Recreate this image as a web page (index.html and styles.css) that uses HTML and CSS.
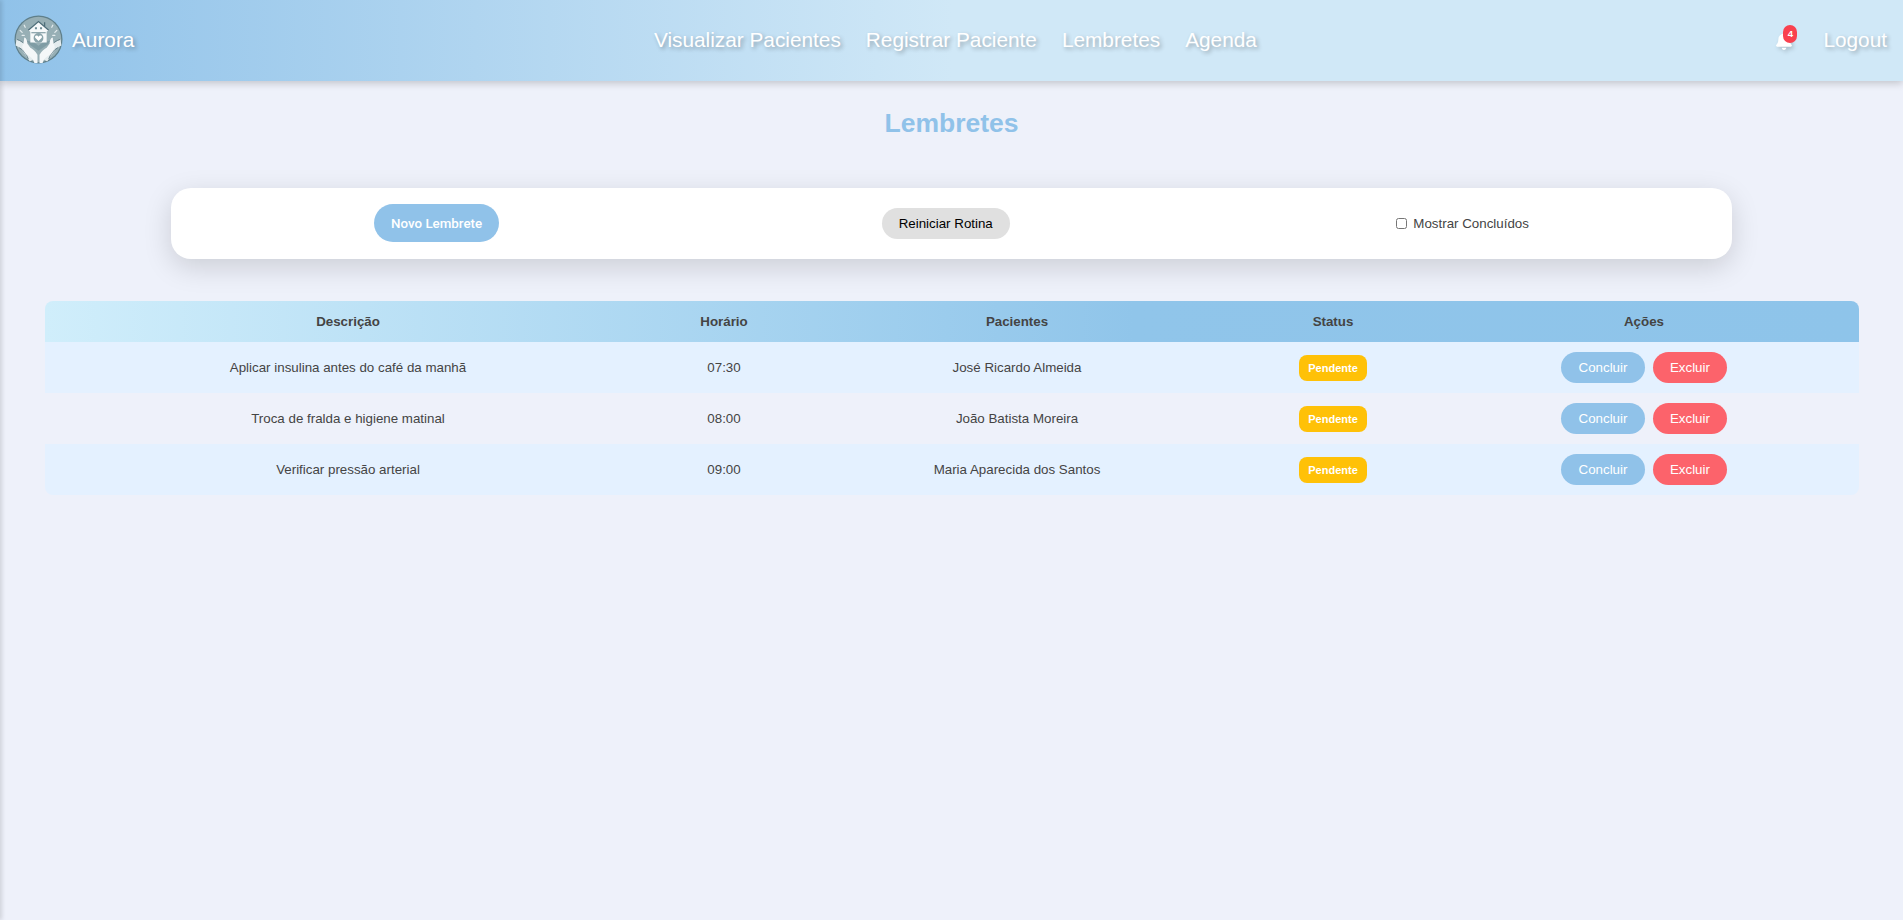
FILE: index.html
```html
<!DOCTYPE html>
<html lang="pt-BR">
<head>
<meta charset="utf-8">
<title>Lembretes</title>
<link rel="stylesheet" href="styles.css">
</head>
<body>
<div class="edge"></div>
<header class="navbar">
  <a class="brand" href="#">
    <svg class="logo" viewBox="0 0 48 48" aria-hidden="true">
      <circle cx="24" cy="24" r="23.5" fill="#5f7f8a"/>
      <circle cx="24" cy="24" r="22.3" fill="#97afb5"/>
      <path d="M2 27c6 1 10 8 16 17M46 27c-6 1-10 8-16 17" fill="none" stroke="#e4ecee" stroke-width="6"/>
      <path d="M3 24c7 2 12 9 17 20M45 24c-7 2-12 9-17 20M5 32c4 2 7 6 9 11M43 32c-4 2-7 6-9 11" fill="none" stroke="#587681" stroke-width=".9"/>
      <path d="M12 25c4 1 9 2 12 5 3-3 8-4 12-5l-3 4-9 6-9-6z" fill="#7f9ca4"/>
      <path d="M8 31c1-2 2-6 2-9 2 0 3 3 3 6l3 4c2 1 5 3 7 7v8h-3c-1-4-4-6-7-8-2-1-4-5-5-8zM40 31c-1-2-2-6-2-9-2 0-3 3-3 6l-3 4c-2 1-5 3-7 7v8h3c1-4 4-6 7-8 2-1 4-5 5-8z" fill="#f4f7f8"/>
      <path d="M14 15 24 6.500l10 8.500-2 1.500V27H16V16.500z" fill="#f6f9fa"/>
      <path d="M14 15 24 6.500l10 8.500M30 7v5" fill="none" stroke="#4f6e79" stroke-width="1.200"/>
      <path d="M20.500 12h2v2h-2zM25.500 12h2v2h-2zM17 17h14v.8H17z" fill="#6f8d96"/>
      <circle cx="24" cy="22.500" r="4.800" fill="#8aa4ab"/>
      <path d="M24 25.500l-3-3c-1.300-1.500.7-3.400 2.100-2.100l.9.800.9-.8c1.400-1.300 3.400.6 2.100 2.100z" fill="#fff"/>
      <path d="M6 15l2 2M10 10l1 2M8 20h2M42 15l-2 2M38 10l-1 2M40 20h-2" stroke="#e4ecee" stroke-width="1.200" stroke-linecap="round"/>
    </svg>
    <span class="brand-name">Aurora</span>
  </a>
  <nav class="nav-links">
    <a href="#">Visualizar Pacientes</a>
    <a href="#">Registrar Paciente</a>
    <a href="#">Lembretes</a>
    <a href="#">Agenda</a>
  </nav>
  <div class="nav-right">
    <span class="bell">
      <svg class="bell-icon" viewBox="0 0 448 512" aria-hidden="true"><path d="M224 512c35 0 64-29 64-64H160c0 35 29 64 64 64zm215-150c-19-21-55-52-55-154 0-78-54-140-128-155V32a32 32 0 0 0-64 0v21C118 68 64 130 64 208c0 102-36 133-55 154-6 6-9 14-9 22 0 16 13 32 32 32h384c19 0 32-16 32-32 0-8-3-16-9-22z"/></svg>
      <span class="bell-badge">4</span>
    </span>
    <a class="logout" href="#">Logout</a>
  </div>
</header>
<main class="page">
  <h1 class="title">Lembretes</h1>
  <section class="toolbar">
    <button class="btn btn-new" type="button">Novo Lembrete</button>
    <button class="btn btn-reset" type="button">Reiniciar Rotina</button>
    <label class="show-done"><input type="checkbox"> Mostrar Concluídos</label>
  </section>
  <table class="reminders">
    <colgroup>
      <col class="c-desc"><col class="c-time"><col class="c-pat"><col class="c-status"><col class="c-act">
    </colgroup>
    <thead>
      <tr><th>Descrição</th><th>Horário</th><th>Pacientes</th><th>Status</th><th>Ações</th></tr>
    </thead>
    <tbody>
      <tr>
        <td>Aplicar insulina antes do café da manhã</td><td>07:30</td><td>José Ricardo Almeida</td>
        <td><span class="badge">Pendente</span></td>
        <td><button class="btn btn-done" type="button">Concluir</button><button class="btn btn-del" type="button">Excluir</button></td>
      </tr>
      <tr>
        <td>Troca de fralda e higiene matinal</td><td>08:00</td><td>João Batista Moreira</td>
        <td><span class="badge">Pendente</span></td>
        <td><button class="btn btn-done" type="button">Concluir</button><button class="btn btn-del" type="button">Excluir</button></td>
      </tr>
      <tr>
        <td>Verificar pressão arterial</td><td>09:00</td><td>Maria Aparecida dos Santos</td>
        <td><span class="badge">Pendente</span></td>
        <td><button class="btn btn-done" type="button">Concluir</button><button class="btn btn-del" type="button">Excluir</button></td>
      </tr>
    </tbody>
  </table>
</main>
</body>
</html>
```
FILE: styles.css
```css
* { box-sizing: border-box; }
html, body { height: 100%; }
body {
  margin: 0;
  background: #eef1fa;
  color: #444;
  font-family: "Liberation Sans", Arial, sans-serif;
  overflow: hidden;
}
a { color: inherit; text-decoration: none; }

.edge {
  position: fixed;
  top: 0;
  bottom: 0;
  left: -10px;
  width: 10px;
  box-shadow: 2px 0 4px rgba(0, 0, 0, .13);
  z-index: 5;
}

.navbar {
  position: relative;
  display: flex;
  align-items: center;
  justify-content: space-between;
  height: 81px;
  padding: 0 16px 2px 14px;
  background: linear-gradient(90deg, #90c2e9 0%, #d0e8f7 50%, #d0e8f7 100%);
  box-shadow: 0 2px 8px rgba(0, 0, 0, .2);
  color: #fff;
  font-size: 20.8px;
  text-shadow: 2px 2px 4px rgba(0, 0, 0, .3);
}
.brand { display: flex; align-items: center; gap: 9px; }
.logo { width: 49px; height: 49px; display: block; }
.nav-links { display: flex; gap: 25px; }
.nav-right { display: flex; align-items: center; gap: 31px; }
.bell { position: relative; display: block; width: 16px; height: 18px; margin-top: 3px; }
.bell-icon { display: block; width: 16px; height: 18px; fill: #fff; filter: drop-shadow(2px 2px 2px rgba(0, 0, 0, .2)); }
.bell-badge {
  position: absolute;
  top: -7px;
  left: 7px;
  width: 14px;
  height: 18px;
  border-radius: 9px;
  background: #f9414f;
  color: #fff;
  font-size: 9.5px;
  font-weight: 700;
  line-height: 18px;
  text-align: center;
  text-shadow: none;
}

.page { display: flow-root; }
.title {
  margin: 26px 0 0;
  color: #90c2e9;
  font-size: 26.500px;
  line-height: 32px;
  text-align: center;
}
.toolbar {
  display: flex;
  align-items: center;
  justify-content: space-around;
  width: 82.05%;
  height: 71px;
  margin: 49px auto 0;
  padding: 0 12px 1px;
  background: #fff;
  border-radius: 20px;
  box-shadow: 0 8px 28px rgba(0, 0, 0, .15);
}
.btn {
  padding: 8px 17px;
  border: 0;
  border-radius: 20px;
  color: #fff;
  font-family: inherit;
  font-size: 13.333px;
}
.btn-new { padding: 11px 17px; height: 38px; background: #90c2e9; font-family: Roboto, sans-serif; font-weight: 500; }
.btn-reset { background: #e0e0e0; color: #000; }
.show-done { display: flex; align-items: center; color: #444; font-size: 13.333px; gap: 3px; }
.show-done input { width: 11px; height: 11px; margin: 3px 3px 3px 4px; }

.reminders {
  width: 1814px;
  margin: 42px 0 0 45px;
  border-collapse: separate;
  border-spacing: 0;
  table-layout: fixed;
  font-size: 13.333px;
}
.c-desc { width: 606px; }
.c-time { width: 146px; }
.c-pat { width: 440px; }
.c-status { width: 192px; }
.c-act { width: 430px; }
.reminders thead tr {
  background: linear-gradient(90deg, #d0eefb 0%, #90c5ea 60%, #8ec4ea 100%);
}
.reminders th { height: 41px; padding: 0; font-weight: 700; color: #444; }
.reminders th:first-child { border-top-left-radius: 8px; }
.reminders th:last-child { border-top-right-radius: 8px; }
.reminders td { padding: 10px; text-align: center; }
.reminders tbody tr:nth-child(odd) { background: #e4f1ff; }
.reminders tbody tr:last-child td:first-child { border-bottom-left-radius: 8px; }
.reminders tbody tr:last-child td:last-child { border-bottom-right-radius: 8px; }
.badge {
  display: inline-block;
  padding: 7px 9px;
  border-radius: 8px;
  background: #ffc107;
  color: #fff;
  font-size: 11px;
  font-weight: 700;
  vertical-align: 2px;
}
.btn-done { padding: 8px 17.500px; background: #90c2e9; }
.btn-del { margin-left: 8px; background: #fc636b; }
```
